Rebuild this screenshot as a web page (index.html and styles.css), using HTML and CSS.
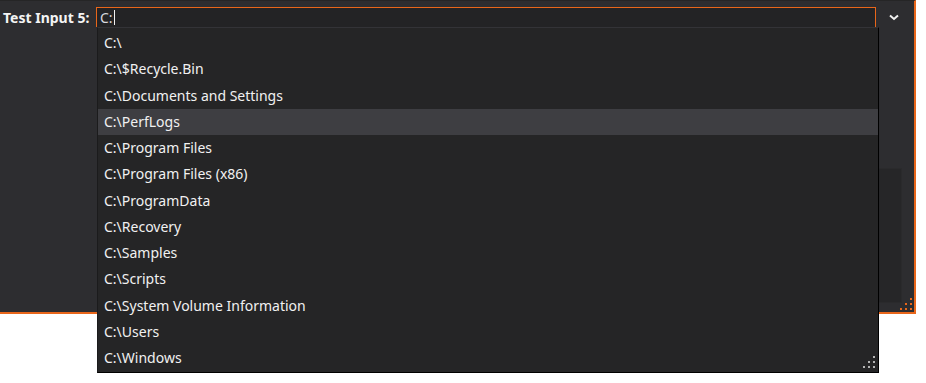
FILE: index.html
```html
<!DOCTYPE html>
<html lang="en">
<head>
    <meta charset="UTF-8">
    <title>Test Input 5</title>
    <link rel="stylesheet" href="styles.css">
</head>
<body>
    <div class="window">
        <div class="field-row">
            <label class="field-label">Test Input 5:</label>
            <div class="combo">
                <span class="combo-text">C:</span><span class="caret"></span>
            </div>
            <span class="combo-toggle">
                <svg width="10" height="7" viewBox="0 0 10 7"><path d="M1 1.5 L5 5 L9 1.5" fill="none" stroke="#f1f1f1" stroke-width="2"/></svg>
            </span>
        </div>
        <div class="text-box"></div>
        <div class="grip grip-orange">
            <i></i><i></i><i></i><i></i><i></i><i></i>
        </div>
    </div>

    <div class="dropdown">
        <div class="item">C:\</div>
        <div class="item">C:\$Recycle.Bin</div>
        <div class="item">C:\Documents and Settings</div>
        <div class="item hover">C:\PerfLogs</div>
        <div class="item">C:\Program Files</div>
        <div class="item">C:\Program Files (x86)</div>
        <div class="item">C:\ProgramData</div>
        <div class="item">C:\Recovery</div>
        <div class="item">C:\Samples</div>
        <div class="item">C:\Scripts</div>
        <div class="item">C:\System Volume Information</div>
        <div class="item">C:\Users</div>
        <div class="item">C:\Windows</div>
        <div class="grip grip-grey">
            <i></i><i></i><i></i><i></i><i></i><i></i>
        </div>
    </div>
</body>
</html>
```

FILE: styles.css
```css
body {
    margin: 0;
    background: #ffffff;
    font-family: "Noto Sans", "Open Sans", sans-serif;
    position: relative;
    min-height: 383px;
}
.window {
    position: relative;
    width: 914px;
    height: 311px;
    background-color: #2d2d30;
    border-right: 2px solid #e8661a;
    border-bottom: 2px solid #e8661a;
    border-top: 1px solid #252526;
    display: flex;
    flex-direction: column;
}
.field-row {
    display: flex;
    align-items: center;
    height: 20px;
    margin-top: 6px;
}
.field-label {
    width: 93px;
    padding-left: 3px;
    color: #f4f4f4;
    font-weight: bold;
    font-size: 14px;
}
.combo {
    width: 780px;
    height: 20px;
    box-sizing: border-box;
    border: 1px solid #e8661a;
    border-bottom: none;
    background-color: #232325;
    display: flex;
    align-items: center;
    padding-left: 3px;
    color: #d8d8de;
    font-size: 14px;
}
.caret {
    display: inline-block;
    width: 1px;
    height: 15px;
    background: #f1f1f1;
    margin-left: 1px;
}
.combo-toggle {
    width: 35px;
    display: flex;
    justify-content: center;
    padding-top: 1px;
}
.text-box {
    margin: 141px 12px 0 100px;
    height: 133px;
    background-color: #262628;
    border: 1px solid #2a2a2c;
}
.grip {
    position: absolute;
    display: grid;
    grid-template-columns: repeat(3, 2px);
    grid-template-rows: repeat(3, 2px);
    gap: 3px;
}
.grip i {
    display: block;
    width: 2px;
    height: 2px;
}
.grip i:nth-child(1) { grid-column: 3; grid-row: 1; }
.grip i:nth-child(2) { grid-column: 2; grid-row: 2; }
.grip i:nth-child(3) { grid-column: 3; grid-row: 2; }
.grip i:nth-child(4) { grid-column: 1; grid-row: 3; }
.grip i:nth-child(5) { grid-column: 2; grid-row: 3; }
.grip i:nth-child(6) { grid-column: 3; grid-row: 3; }
.grip-orange {
    right: 2px;
    bottom: 2px;
}
.grip-orange i {
    background: #e8661a;
}
.grip-grey {
    right: 3px;
    bottom: 4px;
}
.grip-grey i {
    background: #b4b4b4;
}
.dropdown {
    position: absolute;
    left: 97px;
    top: 27px;
    width: 780px;
    height: 342px;
    padding-top: 2px;
    background-color: #252526;
    border: 1px solid #1b1b1c;
    border-top: 1px solid #333337;
    border-right: 1px solid #000;
    border-bottom: 1px solid #000;
}
.item {
    height: 26.25px;
    line-height: 26.25px;
    padding-left: 6px;
    color: #f1f1f1;
    font-size: 14px;
}
.item.hover {
    background-color: #3e3e42;
}
```
